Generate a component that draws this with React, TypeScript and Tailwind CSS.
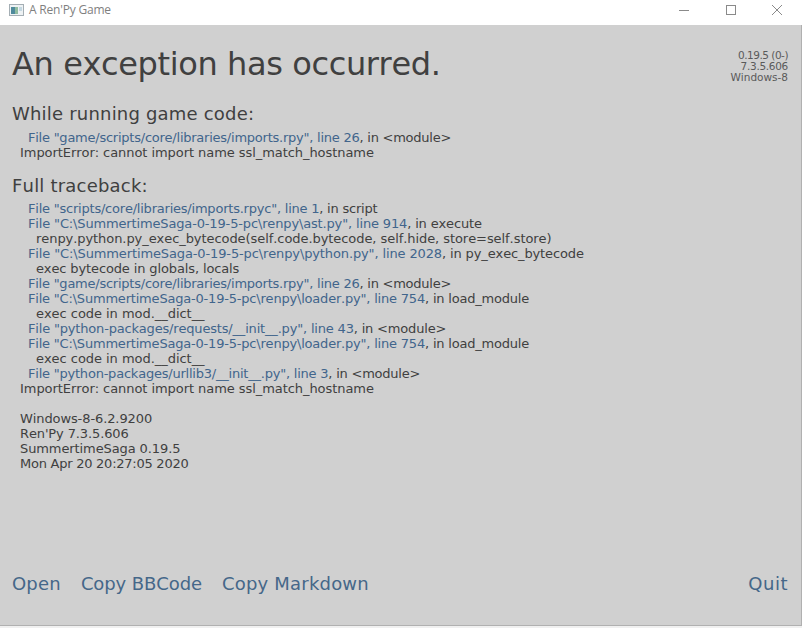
function File({ t, c }: { t: string; c: string }) {
  const m = t.match(/^(.*?)(, in .*)$/)!;
  return (
    <div className={`pl-4 whitespace-pre ${c}`}>
      <span className="text-[#41658c]">{m[1]}</span>
      <span>{m[2]}</span>
    </div>
  );
}
function Code({ t, c }: { t: string; c: string }) {
  return <div className={`pl-6 whitespace-pre ${c}`}>{t}</div>;
}
function Plain({ t, c = '' }: { t: string; c?: string }) {
  return <div className={`pl-2 whitespace-pre ${c}`}>{t}</div>;
}

export default function App() {
  return (
    <div className="w-[802px] h-[628px] flex flex-col bg-white overflow-hidden font-['DejaVu_Sans',sans-serif] [font-kerning:none]">
      <div className="h-[25px] shrink-0 flex items-center bg-white pb-[6px]">
        <svg className="ml-[9px] w-[15px] h-[12px]" viewBox="0 0 15 12">
          <rect x="0.5" y="0.5" width="14" height="11" fill="#eef2f4" stroke="#a4aeb4" />
          <rect x="2" y="3" width="4" height="7" fill="#4f8a9c" />
          <rect x="6" y="3" width="3" height="7" fill="#8fbba0" />
          <rect x="10" y="3" width="3" height="4" fill="#c4d8e2" />
        </svg>
        <span className="ml-[5px] mt-[1px] text-[12px] tracking-[-0.2px] text-[#7f7f7f] font-['Open_Sans',sans-serif]">A Ren'Py Game</span>
        <div className="ml-auto flex items-center">
          <svg className="w-[12px] h-[12px] mr-[35px]" viewBox="0 0 12 12"><path d="M1 6.5H11" stroke="#8a8a8a" fill="none" /></svg>
          <svg className="w-[12px] h-[12px] mr-[34px]" viewBox="0 0 12 12"><rect x="1.5" y="1.5" width="9" height="9" stroke="#8a8a8a" fill="none" /></svg>
          <svg className="w-[12px] h-[12px] mr-[19px]" viewBox="0 0 12 12"><path d="M1 1L11 11M11 1L1 11" stroke="#8a8a8a" fill="none" /></svg>
        </div>
      </div>
      <div className="flex-1 bg-[#d0d0d0] border-b border-r border-[#b0b0b0] pl-3 pr-[13px] flex flex-col text-[#404040] min-h-0">
        <div className="flex justify-between items-start">
          <h1 className="text-[32px] leading-[38px] mt-[20px] whitespace-pre tracking-[-0.38px]">An exception has occurred.</h1>
          <div className="text-[10.5px] leading-[11px] text-right mt-[25px] text-[#5a5a5a]">
            <div className="tracking-[-0.5px]">0.19.5 (0-)</div>
            <div className="tracking-[-0.3px]">7.3.5.606</div>
            <div>Windows-8</div>
          </div>
        </div>
        <h2 className="text-[18px] leading-[22px] mt-[20px] tracking-[0.2px]">While running game code:</h2>
        <div className="text-[13px] leading-[15px] mt-[5px]">
          <File c="tracking-[-0.24px]" t={'File "game/scripts/core/libraries/imports.rpy", line 26, in <module>'} />
          <Plain c="tracking-[-0.06px]" t="ImportError: cannot import name ssl_match_hostname" />
        </div>
        <h2 className="text-[18px] leading-[22px] mt-[15px] tracking-[0.2px]">Full traceback:</h2>
        <div className="text-[13px] leading-[15px] mt-[4px]">
          <File c="tracking-[-0.22px]" t={'File "scripts/core/libraries/imports.rpyc", line 1, in script'} />
          <File c="tracking-[-0.15px]" t={'File "C:\\SummertimeSaga-0-19-5-pc\\renpy\\ast.py", line 914, in execute'} />
          <Code c="tracking-[-0.065px]" t="renpy.python.py_exec_bytecode(self.code.bytecode, self.hide, store=self.store)" />
          <File c="tracking-[-0.125px]" t={'File "C:\\SummertimeSaga-0-19-5-pc\\renpy\\python.py", line 2028, in py_exec_bytecode'} />
          <Code c="tracking-[-0.125px]" t="exec bytecode in globals, locals" />
          <File c="tracking-[-0.24px]" t={'File "game/scripts/core/libraries/imports.rpy", line 26, in <module>'} />
          <File c="tracking-[-0.2px]" t={'File "C:\\SummertimeSaga-0-19-5-pc\\renpy\\loader.py", line 754, in load_module'} />
          <Code c="tracking-[-0.04px]" t="exec code in mod.__dict__" />
          <File c="tracking-[-0.18px]" t={'File "python-packages/requests/__init__.py", line 43, in <module>'} />
          <File c="tracking-[-0.2px]" t={'File "C:\\SummertimeSaga-0-19-5-pc\\renpy\\loader.py", line 754, in load_module'} />
          <Code c="tracking-[-0.04px]" t="exec code in mod.__dict__" />
          <File c="tracking-[-0.22px]" t={'File "python-packages/urllib3/__init__.py", line 3, in <module>'} />
          <Plain c="tracking-[-0.06px]" t="ImportError: cannot import name ssl_match_hostname" />
          <Plain t=" " />
          <Plain c="tracking-[-0.1px]" t="Windows-8-6.2.9200" />
          <Plain c="tracking-[-0.12px]" t="Ren'Py 7.3.5.606" />
          <Plain c="tracking-[-0.1px]" t="SummertimeSaga 0.19.5" />
          <Plain c="tracking-[-0.25px]" t="Mon Apr 20 20:27:05 2020" />
        </div>
        <div className="mt-auto mb-[30px] flex text-[18px] leading-[22px] text-[#456789] tracking-[0.2px] gap-[20px]">
          <span>Open</span>
          <span className="tracking-[-0.1px]">Copy BBCode</span>
          <span>Copy Markdown</span>
          <span className="ml-auto tracking-[0.5px]">Quit</span>
        </div>
      </div>
      <div className="h-[2px] shrink-0 bg-[#f0f0f0]" />
    </div>
  );
}
